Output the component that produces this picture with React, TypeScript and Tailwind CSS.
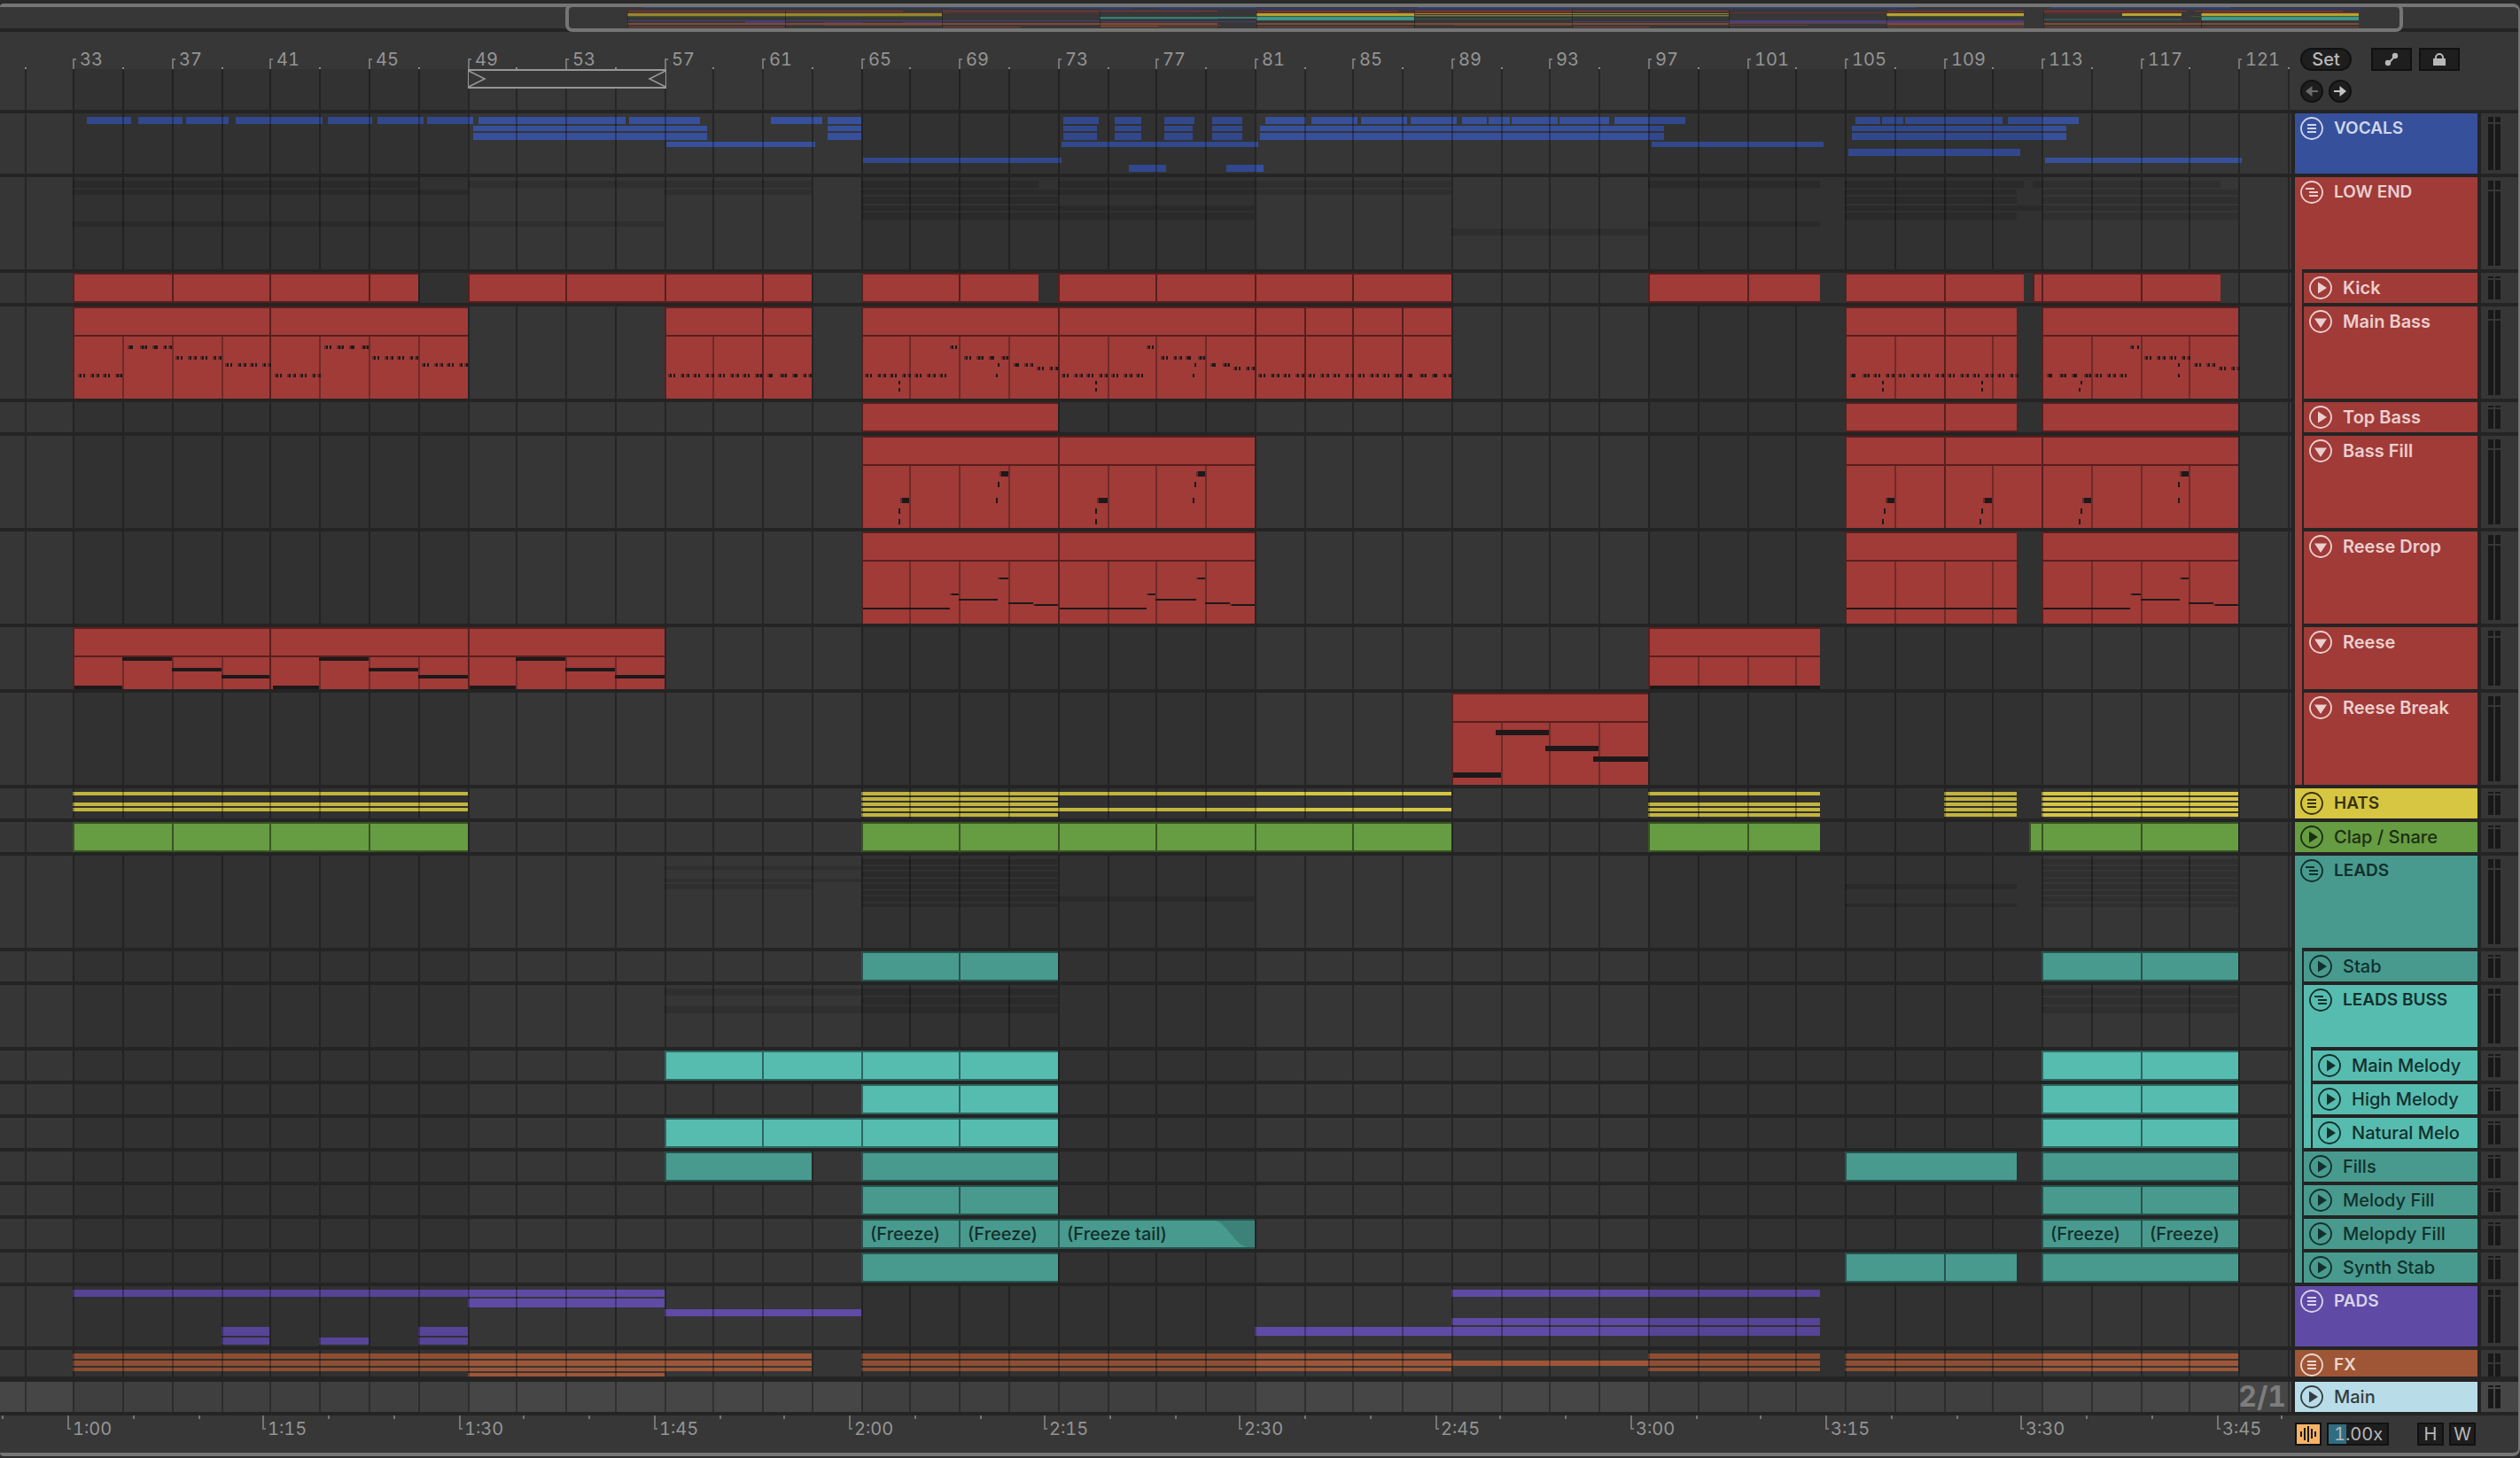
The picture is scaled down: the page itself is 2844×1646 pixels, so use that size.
import React from 'react';

type Span = [number, number];
type Lane = { top: number; h: number; spans: Span[] };
type Note = { from: number; to?: number; y: number; h: number; soft?: boolean; w?: number };
type Clip = { from: number; to: number; label?: string; fade?: boolean };
type Kind = 'folded' | 'open' | 'play' | 'down';

type Track = {
  name: string;
  kind: Kind;
  height: string;
  meter: string;
  fill: string;
  ink: string;
  edge?: string;
  tall?: boolean;
  clips?: Clip[];
  notes?: Note[];
  lanes?: Lane[];
  laneFill?: string;
  children?: Track[];
};

// first visible bar and number of bars across the arrangement
const FIRST = 30.0202;
const VISIBLE = 93.122;
const SONG_FIRST = 1.108;
const SONG_BARS = 128.02;

// positions are snapped to 2px so that lines stay crisp
const at = (bar: number) => `round(${(((bar - FIRST) / VISIBLE) * 100).toFixed(4)}%, 2px)`;
const atEnd = (bar: number) => `calc(100% - ${at(bar)})`;
const inSong = (bar: number) => `${((bar - SONG_FIRST) / SONG_BARS) * 100}%`;

const range = (from: number, to: number, step: number) => {
  const out: number[] = [];
  for (let n = from; n < to; n += step) out.push(n);
  return out;
};

// run(33, 37, 41) -> clips 33-37 and 37-41
const run = (...bars: number[]): Clip[] =>
  bars.slice(1).map((to, i) => ({ from: bars[i], to }));

const pulses = (from: number, to: number, y: number): Note[] =>
  range(from, to, 0.5).flatMap((b) => [
    { from: b + 0.18, y, h: 4, w: 4, soft: true },
    { from: b + 0.38, y, h: 4, w: b % 1 === 0 ? 2 : 4, soft: b % 1 !== 0 },
  ]);

const bassIntro = (b: number): Note[] => [
  ...pulses(b, b + 2, 42),
  ...pulses(b + 2, b + 4, 10),
  ...pulses(b + 4, b + 6, 22),
  ...pulses(b + 6, b + 8, 30),
];

const bassDrop = (b: number): Note[] => [
  ...pulses(b, b + 3.5, 42),
  { from: b + 1.54, y: 50, h: 4, w: 2 },
  { from: b + 1.5, y: 58, h: 4, w: 2 },
  { from: b + 3.6, y: 10, h: 4, w: 4, soft: true },
  { from: b + 3.86, y: 10, h: 4, w: 2 },
  ...pulses(b + 4, b + 6, 22),
  { from: b + 5.54, y: 30, h: 4, w: 2 },
  { from: b + 5.5, y: 42, h: 4, w: 2 },
  ...pulses(b + 6, b + 7, 30),
  ...pulses(b + 7, b + 8, 34),
];

const fillLow = (b: number): Note[] => [
  { from: b + 1.62, to: b + 2, y: 36, h: 6, soft: true },
  { from: b + 1.56, y: 48, h: 6, w: 2 },
  { from: b + 1.5, y: 60, h: 6, w: 2 },
];

const fillHigh = (b: number): Note[] => [
  { from: b + 5.62, to: b + 6, y: 6, h: 6, soft: true },
  { from: b + 5.56, y: 18, h: 6, w: 2 },
  { from: b + 5.5, y: 36, h: 6, w: 2 },
];

const dropLine = (b: number): Note[] => [
  { from: b + 0.08, to: b + 3.6, y: 52, h: 2 },
  { from: b + 3.6, to: b + 4, y: 36, h: 2, soft: true },
  { from: b + 4, to: b + 5.6, y: 42, h: 2 },
  { from: b + 5.6, to: b + 6, y: 18, h: 2, soft: true },
  { from: b + 6, to: b + 7, y: 46, h: 2 },
  { from: b + 7, to: b + 8, y: 48, h: 2, soft: true },
];

const reeseLine = (b: number): Note[] => [
  { from: b + 0.08, to: b + 2, y: 32, h: 4 },
  { from: b + 2, to: b + 4, y: 0, h: 4 },
  { from: b + 4, to: b + 6, y: 12, h: 4 },
  { from: b + 6, to: b + 8, y: 20, h: 4 },
];

const red = { fill: 'bg-[#a03b38]', ink: 'text-[#ebcfce] font-semibold', edge: 'border-[#571f1e]' };
const teal = { fill: 'bg-[#489a8e]', ink: 'text-[#12302c] font-medium', edge: 'border-[#26544e]' };
const mint = { fill: 'bg-[#57bcb0]', ink: 'text-[#12302c] font-medium', edge: 'border-[#2c6660]' };

const small = { height: 'h-[34px]', meter: 'h-0.5' };
const medium = { height: 'h-[70px]', meter: 'h-1.5' };
const large = { height: 'h-[104px]', meter: 'h-2.5' };

const ghost = 'bg-black/12';

const vocalDoubles: Span[] = [
  [49.25, 58.75], [63.65, 65.02], [73.23, 74.6], [75.32, 76.4], [77.33, 78.49],
  [79.28, 80.5], [81.22, 97.64], [105.28, 113.99],
];

const tracks: Track[] = [
  {
    name: 'VOCALS', kind: 'folded', height: 'h-[68px]', meter: 'h-1.5',
    fill: 'bg-[#37509c]', ink: 'text-[#cfd6ea] font-semibold', laneFill: 'bg-[#37509c]',
    lanes: [
      {
        top: 4, h: 8,
        spans: [
          [33.54, 35.34], [35.63, 37.43], [37.58, 39.31], [39.59, 43.12], [43.34, 45.14], [45.36, 47.23],
          [47.37, 49.25], [49.46, 55.44], [55.58, 58.46], [61.35, 63.43], [63.65, 65.02], [73.23, 74.67],
          [75.32, 76.4], [77.33, 78.56], [79.28, 80.5], [81.44, 83.09], [83.31, 85.18], [85.33, 87.2],
          [87.34, 89.22], [89.43, 90.44], [90.51, 91.38], [91.45, 93.32], [93.39, 95.41], [95.63, 98.51],
          [105.42, 106.43], [106.5, 107.37], [107.44, 111.4], [111.61, 114.5],
        ],
      },
      { top: 14, h: 6, spans: vocalDoubles },
      { top: 22, h: 8, spans: vocalDoubles },
      { top: 32, h: 6, spans: [[57.1, 63.15], [73.16, 81.15], [97.14, 104.12]] },
      { top: 40, h: 8, spans: [[105.13, 112.12]] },
      { top: 50, h: 6, spans: [[65.09, 73.16], [113.13, 121.12]] },
      { top: 58, h: 8, spans: [[75.89, 77.41], [79.86, 81.37]] },
    ],
  },
  {
    name: 'LOW END', kind: 'open', ...large, ...red, laneFill: ghost,
    lanes: [
      { top: 4, h: 8, spans: [[33, 47], [49, 63], [65, 72.22], [73, 89], [97, 104], [105, 112.26], [112.6, 120.26]] },
      { top: 14, h: 6, spans: [[33, 49], [57, 63], [65, 89], [105, 112], [113, 121]] },
      { top: 22, h: 8, spans: [[65, 73], [105, 112], [113, 121]] },
      { top: 32, h: 6, spans: [[65, 81], [105, 121]] },
      { top: 40, h: 8, spans: [[65, 81], [105, 112], [113, 121]] },
      { top: 50, h: 6, spans: [[33, 57], [97, 104]] },
      { top: 58, h: 8, spans: [[89, 97]] },
    ],
    children: [
      {
        name: 'Kick', kind: 'play', ...small, ...red,
        clips: [
          ...run(33, 37, 41, 45, 47), ...run(49, 53, 57, 61, 63), ...run(65, 69, 72.22), ...run(73, 77, 81, 85, 89),
          ...run(97, 101, 104), ...run(105, 109, 112.26), ...run(112.6, 113, 117, 120.26),
        ],
      },
      {
        name: 'Main Bass', kind: 'down', tall: true, ...large, ...red,
        clips: [...run(33, 41, 49), ...run(57, 61, 63), ...run(65, 73, 81, 83, 85, 87, 89), ...run(105, 109, 112), ...run(113, 121)],
        notes: [
          ...bassIntro(33), ...bassIntro(41), ...pulses(57, 63, 42), ...bassDrop(65), ...bassDrop(73),
          ...pulses(81, 89, 42), ...pulses(105, 112, 42),
          { from: 106.54, y: 50, h: 4, w: 2 }, { from: 106.5, y: 58, h: 4, w: 2 },
          { from: 110.56, y: 50, h: 4, w: 2 }, { from: 110.56, y: 58, h: 4, w: 2 },
          ...bassDrop(113),
        ],
      },
      { name: 'Top Bass', kind: 'play', ...small, ...red, clips: [...run(65, 73), ...run(105, 109, 112), ...run(113, 121)] },
      {
        name: 'Bass Fill', kind: 'down', tall: true, ...large, ...red,
        clips: [...run(65, 73, 81), ...run(105, 109, 113, 121)],
        notes: [
          ...fillLow(65), ...fillHigh(65), ...fillLow(73), ...fillHigh(73),
          ...fillLow(105), ...fillLow(109), ...fillLow(113), ...fillHigh(113),
        ],
      },
      {
        name: 'Reese Drop', kind: 'down', tall: true, ...large, ...red,
        clips: [...run(65, 73, 81), ...run(105, 112), ...run(113, 121)],
        notes: [...dropLine(65), ...dropLine(73), { from: 105.08, to: 112, y: 52, h: 2 }, ...dropLine(113)],
      },
      {
        name: 'Reese', kind: 'down', tall: true, ...medium, ...red,
        clips: [...run(33, 41, 49, 57), ...run(97, 104)],
        notes: [...reeseLine(33), ...reeseLine(41), ...reeseLine(49), { from: 97.08, to: 104, y: 32, h: 4 }],
      },
      {
        name: 'Reese Break', kind: 'down', tall: true, ...large, ...red,
        clips: run(89, 97),
        notes: [
          { from: 89.08, to: 91, y: 56, h: 6 }, { from: 90.8, to: 93, y: 8, h: 6 },
          { from: 92.8, to: 95, y: 26, h: 6 }, { from: 94.8, to: 97, y: 38, h: 6 },
        ],
      },
    ],
  },
  {
    name: 'HATS', kind: 'folded', ...small, fill: 'bg-[#d7c642]', ink: 'text-[#37320f] font-semibold', laneFill: 'bg-[#d7c642]',
    lanes: [
      { top: 4, h: 4, spans: [[33, 49], [65, 89], [97, 104], [109, 112], [113, 121]] },
      { top: 10, h: 4, spans: [[65, 73], [109, 112], [113, 121]] },
      { top: 16, h: 4, spans: [[33, 49], [65, 73], [97, 104], [109, 112], [113, 121]] },
      { top: 22, h: 4, spans: [[33, 49], [65, 89], [97, 104], [109, 112], [113, 121]] },
      { top: 28, h: 4, spans: [[65, 73], [97, 104], [109, 112], [113, 121]] },
    ],
  },
  {
    name: 'Clap / Snare', kind: 'play', ...small, fill: 'bg-[#669c42]', ink: 'text-[#1c2e12] font-medium', edge: 'border-[#375422]',
    clips: [...run(33, 37, 41, 45, 49), ...run(65, 69, 73, 77, 81, 85, 89), ...run(97, 101, 104), ...run(112.5, 113, 117, 121)],
  },
  {
    name: 'LEADS', kind: 'open', ...large, ...teal, laneFill: ghost,
    lanes: [
      { top: 4, h: 6, spans: [[65, 73], [113, 121]] },
      { top: 12, h: 4, spans: [[57, 73], [113, 121]] },
      { top: 18, h: 6, spans: [[65, 73], [113, 121]] },
      { top: 26, h: 4, spans: [[57, 73], [113, 121]] },
      { top: 32, h: 6, spans: [[57, 63], [65, 73], [105, 112], [113, 121]] },
      { top: 40, h: 4, spans: [[65, 73], [113, 121]] },
      { top: 46, h: 6, spans: [[65, 81], [113, 121]] },
      { top: 54, h: 4, spans: [[65, 73], [105, 112], [113, 121]] },
    ],
    children: [
      { name: 'Stab', kind: 'play', ...small, ...teal, clips: [...run(65, 69, 73), ...run(113, 117, 121)] },
      {
        name: 'LEADS BUSS', kind: 'open', ...medium, ...mint, laneFill: ghost,
        lanes: [
          { top: 4, h: 8, spans: [[57, 73], [113, 121]] },
          { top: 14, h: 8, spans: [[65, 73], [113, 121]] },
          { top: 24, h: 8, spans: [[57, 73], [113, 121]] },
        ],
        children: [
          { name: 'Main Melody', kind: 'play', ...small, ...mint, clips: [...run(57, 61, 65, 69, 73), ...run(113, 117, 121)] },
          { name: 'High Melody', kind: 'play', ...small, ...mint, clips: [...run(65, 69, 73), ...run(113, 117, 121)] },
          { name: 'Natural Melo', kind: 'play', ...small, ...mint, clips: [...run(57, 61, 65, 69, 73), ...run(113, 117, 121)] },
        ],
      },
      { name: 'Fills', kind: 'play', ...small, ...teal, clips: [...run(57, 63), ...run(65, 73), ...run(105, 112), ...run(113, 121)] },
      { name: 'Melody Fill', kind: 'play', ...small, ...teal, clips: [...run(65, 69, 73), ...run(113, 117, 121)] },
      {
        name: 'Melopdy Fill', kind: 'play', ...small, ...teal,
        clips: [
          { from: 65, to: 69, label: '(Freeze)' },
          { from: 69, to: 73, label: '(Freeze)' },
          { from: 73, to: 81, label: '(Freeze tail)', fade: true },
          { from: 113, to: 117, label: '(Freeze)' },
          { from: 117, to: 121, label: '(Freeze)' },
        ],
      },
      { name: 'Synth Stab', kind: 'play', ...small, ...teal, clips: [...run(65, 73), ...run(105, 109, 112), ...run(113, 121)] },
    ],
  },
  {
    name: 'PADS', kind: 'folded', height: 'h-[68px]', meter: 'h-1.5',
    fill: 'bg-[#5f4ba6]', ink: 'text-[#d8d2ea] font-semibold', laneFill: 'bg-[#5f4ba6]',
    lanes: [
      { top: 4, h: 8, spans: [[33, 57], [89, 104]] },
      { top: 14, h: 10, spans: [[49, 57]] },
      { top: 26, h: 8, spans: [[57, 65]] },
      { top: 36, h: 8, spans: [[89, 104]] },
      { top: 46, h: 10, spans: [[39, 41], [47, 49], [81, 104]] },
      { top: 58, h: 8, spans: [[39, 41], [43, 45], [47, 49]] },
    ],
  },
  {
    name: 'FX', kind: 'folded', height: 'h-[30px]', meter: 'h-2.5',
    fill: 'bg-[#9e5637]', ink: 'text-[#ecd6cc] font-semibold', laneFill: 'bg-[#9e5637]',
    lanes: [
      { top: 4, h: 6, spans: [[33, 63], [65, 89], [97, 104], [105, 121]] },
      { top: 12, h: 6, spans: [[33, 63], [65, 104], [105, 121]] },
      { top: 20, h: 4, spans: [[33, 63], [65, 89], [97, 104], [105, 121]] },
      { top: 26, h: 4, spans: [[49, 57]] },
    ],
  },
];

const main: Track = { name: 'Main', kind: 'play', ...small, fill: 'bg-[#b9dde8]', ink: 'text-[#333d41] font-medium' };

const flatten = (list: Track[]): Track[] => list.flatMap((t) => [t, ...flatten(t.children ?? [])]);
const rows = flatten(tracks);

const Grid = () => (
  <>
    {[33, 65, 97].map((b) => (
      <div key={b} className="absolute inset-y-0 bg-black/9" style={{ left: at(b), right: atEnd(b + 16) }} />
    ))}
    {range(31, 124, 2).map((b) => (
      <div key={b} className="absolute inset-y-0 w-0.5 bg-black/30" style={{ left: at(b) }} />
    ))}
  </>
);

const ClipView = ({ clip, track }: { clip: Clip; track: Track }) => (
  <div
    className={`absolute inset-y-0 overflow-hidden border-l-2 border-t-2 ${track.tall ? '' : 'border-b-2'} ${track.fill} ${track.edge}`}
    style={{ left: at(clip.from), right: atEnd(clip.to) }}
  >
    {track.tall && <div className={`h-8 border-b-2 ${track.edge}`} />}
    {clip.label && (
      <span className="block whitespace-nowrap pl-2 text-xl font-medium leading-[30px] text-[#12302c]">{clip.label}</span>
    )}
    {clip.fade && (
      <svg className="absolute right-0 top-0" width="44" height="30" viewBox="0 0 44 30">
        <path d="M0 0C7 2 11 8 17 15S28 29 36 30H44V0Z" fill="#3d8278" />
      </svg>
    )}
  </div>
);

const NoteView = ({ note }: { note: Note }) => (
  <div
    className={`absolute bg-[#1d191a] ${note.soft ? 'border-l-2 border-[#672c2a]' : ''}`}
    style={{
      left: at(note.from),
      right: note.to ? atEnd(note.to) : undefined,
      width: note.w,
      top: 34 + note.y,
      height: note.h,
    }}
  />
);

const LaneRow = ({ track }: { track: Track }) => (
  <div className={`relative overflow-hidden bg-[#363636] ${track.height}`}>
    {track.lanes?.map((lane) =>
      lane.spans.map(([from, to]) => (
        <div
          key={`${lane.top}-${from}`}
          className={`absolute ${track.laneFill}`}
          style={{ left: at(from), right: atEnd(to), top: lane.top, height: lane.h }}
        />
      ))
    )}
    <Grid />
    {track.clips?.map((clip) => <ClipView key={clip.from} clip={clip} track={track} />)}
    {track.tall &&
      track.clips?.map((clip) =>
        range(clip.from + 2, clip.to, 2).map((b) => (
          <div key={b} className="absolute bottom-0 top-[34px] w-0.5 bg-[#702a28]" style={{ left: at(b) }} />
        ))
      )}
    {track.notes?.map((note, i) => <NoteView key={i} note={note} />)}
  </div>
);

const TrackIcon = ({ kind }: { kind: Kind }) => (
  <svg width="26" height="26" viewBox="0 0 26 26" fill="currentColor">
    <circle cx="13" cy="13" r="12" fill="none" stroke="currentColor" strokeWidth="1.8" />
    {kind === 'folded' && <path d="M8 8h10v2H8zM8 12h10v2H8zM8 16h10v2H8z" />}
    {kind === 'open' && <path d="M6 8h10v2H6zM10 12h10v2H10zM10 16h10v2H10z" />}
    {kind === 'play' && <path d="M10 6.5L20 13L10 19.5z" />}
    {kind === 'down' && <path d="M6 9.5H20L13 20z" />}
  </svg>
);

const TrackHeader = ({ track, nested = false }: { track: Track; nested?: boolean }) => {
  const group = track.kind === 'folded' || track.kind === 'open';
  return (
    <div className={`${track.fill} ${nested ? 'border-l-2 border-t-4 border-[#242424]' : ''}`}>
      <div className={`flex items-start gap-3 overflow-hidden pl-1.5 pt-1 ${track.height} ${track.ink}`}>
        <button aria-label={`Unfold ${track.name}`} className="shrink-0">
          <TrackIcon kind={track.kind} />
        </button>
        <span className={`whitespace-nowrap leading-[26px] ${group ? 'text-[19px] font-semibold' : 'text-xl'}`}>
          {track.name}
        </span>
      </div>
      {track.children && (
        <div className="pl-2">
          {track.children.map((child) => <TrackHeader key={child.name} track={child} nested />)}
        </div>
      )}
    </div>
  );
};

const Meter = ({ track }: { track: Track }) => (
  <div className={`flex gap-0.5 pl-2 pt-1 ${track.name === 'FX' ? '' : 'pb-1'} ${track.name === 'Main' ? 'mt-0.5 bg-[#464646]' : 'bg-[#363636]'} ${track.height}`}>
    {[0, 1].map((n) => (
      <div key={n} className="flex w-1.5 flex-col gap-0.5">
        <div className={`bg-[#181818] ${track.meter}`} />
        <div className="flex-1 bg-[#181818]" />
      </div>
    ))}
  </div>
);

// miniature of the whole song: color, top, height, spans in bars
const overview: [string, number, number, Span[]][] = [
  ['bg-[#344575]', 0, 1, [[33.8, 65], [73.2, 98.5], [105.4, 114.5]]],
  ['bg-[#2f3c66]', 1, 1, [[49.2, 58.7], [60, 65], [65, 81], [81.2, 97.6], [105.2, 121.1]]],
  ['bg-[#2f3b60]', 2, 1, [[57, 62], [65, 81], [97.2, 104], [113, 121.4]]],
  ['bg-[#883734]', 4, 1, [[33, 47], [49, 63], [65, 72.2], [73, 89], [97, 104], [105, 112.3], [112.7, 120.2]]],
  ['bg-[#602c2b]', 5, 1, [[65, 73], [73, 81], [105, 112], [113, 121]]],
  ['bg-[#6b3030]', 6, 1, [[33, 49], [49, 57], [65, 81], [89, 97], [97, 104], [105, 112], [113, 121]]],
  ['bg-[#94862e]', 7, 1, [[33, 49], [73, 89]]],
  ['bg-[#94862e]', 8, 2, [[33, 49]]],
  ['bg-[#b3a332]', 7, 3, [[65, 73], [97, 104], [109, 112], [113, 121]]],
  ['bg-[#85792f]', 9, 1, [[73, 89]]],
  ['bg-[#3f5a2d]', 10, 1, [[33, 49], [65, 89], [97, 104], [112.5, 121]]],
  ['bg-[#3a7c73]', 11, 2, [[57, 65]]],
  ['bg-[#3f968a]', 11, 4, [[65, 73], [113, 121]]],
  ['bg-[#2f5551]', 13, 1, [[57, 63], [73, 81], [105, 112]]],
  ['bg-[#2f5551]', 14, 1, [[105, 112]]],
  ['bg-[#4a4080]', 15, 1, [[33, 57], [89, 104]]],
  ['bg-[#4a4080]', 16, 2, [[89, 104]]],
  ['bg-[#4a3c74]', 16, 1, [[39, 41], [57, 65], [81, 89]]],
  ['bg-[#4a3c74]', 17, 1, [[39, 41], [43, 45], [47, 49]]],
  ['bg-[#7f4a33]', 18, 2, [[33, 63], [65, 89], [97, 104], [105, 121]]],
  ['bg-[#6b3d2e]', 18, 1, [[89, 97]]],
  ['bg-[#5e3f33]', 20, 1, [[43, 49], [57, 63.2], [75, 81], [89, 93], [97, 104]]],
  ['bg-[#70452f]', 21, 2, [[57, 60]]],
  ['bg-[#70402f]', 22, 1, [[33, 41], [49, 53], [57, 63], [65, 73], [81, 85], [97, 104], [105, 113], [113, 121]]],
];

const Overview = () => (
  <div className="relative h-7 border-b-4 border-[#242424]">
    {overview.map(([color, top, h, spans], i) =>
      spans.map(([from, to]) => (
        <div
          key={`${i}-${from}`}
          className={`absolute ${color}`}
          style={{ left: inSong(from), width: inSong(to - from + SONG_FIRST), top, height: h }}
        />
      ))
    )}
    {range(33, 121, 8).map((b) => (
      <div key={b} className="absolute bottom-0 top-1 w-px bg-black/30" style={{ left: inSong(b) }} />
    ))}
    <div className="absolute -top-1 h-8 rounded-lg border-4 border-[#757575]" style={{ left: '22.45%', right: '4.57%' }} />
  </div>
);

const Ruler = () => (
  <div className="relative h-[42px] overflow-hidden tabular-nums">
    {range(31, 124, 4).map((b) => (
      <div key={b} className="absolute bottom-0 h-0.5 w-0.5 bg-[#8a8a8a]" style={{ left: at(b) }} />
    ))}
    {range(33, 124, 4).map((b) => (
      <div key={b} className="absolute bottom-0 h-full" style={{ left: at(b) }}>
        <div className="absolute bottom-0 h-3 w-1 border-l-2 border-t-2 border-[#757575]" />
        <span className="block pl-2 pt-[18px] text-xl leading-[26px] text-[#949494]">{b}</span>
      </div>
    ))}
  </div>
);

const LoopBrace = () => (
  <div
    className="absolute top-0 flex h-[22px] justify-between border-x border-y-2 border-[#969696] bg-[#363636]"
    style={{ left: at(49), right: `calc(100% - 2px - ${at(57)})` }}
  >
    <svg width="20" height="18" viewBox="0 0 20 18" fill="none" stroke="#969696" strokeWidth="1.6">
      <path d="M0 0L18 9L0 18" />
    </svg>
    <svg width="20" height="18" viewBox="0 0 20 18" fill="none" stroke="#969696" strokeWidth="1.6">
      <path d="M20 0L2 9L20 18" />
    </svg>
  </div>
);

// 15 seconds last 7.938 bars at this tempo, 1:00 falls just before bar 33
const barAt = (seconds: number) => 32.77 + ((seconds - 60) * 7.938) / 15;
const clock = (s: number) => `${Math.floor(s / 60)}:${String(s % 60).padStart(2, '0')}`;

const TimeRuler = () => (
  <div className="relative h-[42px] min-w-0 flex-1 overflow-hidden tabular-nums">
    {range(55, 235, 5).map((s) =>
      s % 15 === 0 ? (
        <div key={s} className="absolute top-0" style={{ left: at(barAt(s)) }}>
          <div className="absolute top-0 h-4 w-1 border-b-2 border-l-2 border-[#757575]" />
          <span className="block pl-1.5 pt-0.5 text-xl leading-[26px] text-[#949494]">{clock(s)}</span>
        </div>
      ) : (
        <div key={s} className="absolute top-0 h-1 w-0.5 bg-[#757575]" style={{ left: at(barAt(s)) }} />
      )
    )}
  </div>
);

const dark = 'grid place-items-center border-2 border-[#111111] bg-[#1e1e1e] text-[#b8b8b8]';

const LocatorControls = () => (
  <div className="flex w-[256px] flex-col gap-2.5 pl-2.5 pt-[18px]">
    <div className="flex">
      <button className={`h-[26px] w-[58px] rounded-full text-xl leading-none font-medium ${dark}`}>Set</button>
      <button aria-label="Automation mode" className={`ml-[22px] h-[26px] w-[46px] ${dark}`}>
        <svg width="18" height="18" viewBox="0 0 18 18" fill="currentColor">
          <circle cx="13" cy="5" r="3.2" />
          <circle cx="5" cy="13" r="3.2" />
          <path d="M5 13C9 11 9 9 13 5" fill="none" stroke="currentColor" strokeWidth="2" />
        </svg>
      </button>
      <button aria-label="Lock envelopes" className={`ml-2 h-[26px] w-[46px] ${dark}`}>
        <svg width="14" height="14" viewBox="0 0 14 14" fill="currentColor">
          <path d="M0 6h14v8H0z" />
          <path d="M3 7V5a4 4 0 0 1 8 0V7" fill="none" stroke="currentColor" strokeWidth="2" />
        </svg>
      </button>
    </div>
    <div className="flex gap-1.5">
      <button aria-label="Previous locator" className="h-[26px] w-[26px] rounded-full border-2 border-[#111111] bg-[#1e1e1e] text-[#6b6b6b]">
        <svg width="22" height="22" viewBox="0 0 22 22" fill="currentColor">
          <path d="M4 11L11.5 5V10H18V12H11.5V17z" />
        </svg>
      </button>
      <button aria-label="Next locator" className="h-[26px] w-[26px] rounded-full border-2 border-[#111111] bg-[#1e1e1e] text-[#c4c4c4]">
        <svg width="22" height="22" viewBox="0 0 22 22" fill="currentColor">
          <path d="M18 11L10.5 5V10H4V12H10.5V17z" />
        </svg>
      </button>
    </div>
  </div>
);

const BottomControls = () => (
  <div className="flex w-[256px] items-start pl-1 pt-2">
    <button aria-label="Waveform zoom" className="grid h-[26px] w-[30px] place-items-center border-2 border-[#111111] bg-[#f7b267]">
      <svg width="22" height="20" viewBox="0 0 22 20" fill="#1a1a1a">
        <path d="M2 7h2v6H2zM6 3h2v14H6zM10 1h2v18h-2zM14 4h2v11h-2zM18 7h2v6h-2z" />
      </svg>
    </button>
    <input
      aria-label="Track height zoom"
      defaultValue="1.00x"
      className="ml-1.5 h-[26px] w-[70px] border-2 border-[#111111] bg-[linear-gradient(to_right,#2f6d82_20px,#1e1e1e_20px)] pl-1.5 text-xl leading-[22px] tabular-nums text-[#b8b8b8] outline-none"
    />
    <button className={`ml-8 h-[26px] w-[30px] text-xl leading-none ${dark}`}>H</button>
    <button className={`ml-1.5 h-[26px] w-[30px] text-xl leading-none ${dark}`}>W</button>
  </div>
);

export default function App() {
  return (
    <div className="min-h-screen bg-[#2a2a2a] pb-0.5 pt-1 font-['Inter','Noto_Sans',sans-serif]">
      <div className="rounded-l-sm rounded-r-lg border-y-4 border-r-2 border-[#757575] bg-[#373737]">
        <Overview />

        <div className="flex">
          <div className="min-w-0 flex-1">
            <Ruler />
            <div className="relative h-[46px] overflow-hidden">
              <Grid />
              <LoopBrace />
            </div>
          </div>
          <LocatorControls />
        </div>

        <div className="flex gap-1 border-y-4 border-[#242424] bg-[#242424]">
          <div className="flex min-w-0 flex-1 flex-col gap-1">
            {rows.map((track) => <LaneRow key={track.name} track={track} />)}
            <div className="relative mt-0.5 flex h-[34px] items-center justify-end bg-[#464646] pr-1.5">
              <Grid />
              <span className="relative text-[32px] font-bold leading-[34px] tabular-nums text-[#7d7d7d]">2/1</span>
            </div>
          </div>
          <div className="flex w-[206px] flex-col gap-1">
            {tracks.map((track) => <TrackHeader key={track.name} track={track} />)}
            <div className="mt-0.5">
              <TrackHeader track={main} />
            </div>
          </div>
          <div className="flex w-[42px] flex-col gap-1">
            {[...rows, main].map((track) => <Meter key={track.name} track={track} />)}
          </div>
        </div>

        <div className="flex">
          <TimeRuler />
          <BottomControls />
        </div>
      </div>
    </div>
  );
}
